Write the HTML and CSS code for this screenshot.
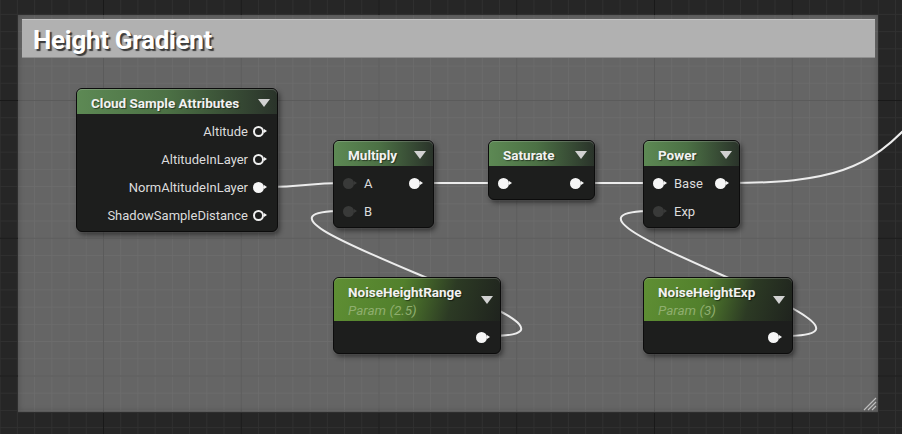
FILE: index.html
```html
<!DOCTYPE html>
<html lang="en">
<head>
    <meta charset="UTF-8">
    <title>Height Gradient</title>
    <link rel="stylesheet" href="styles.css">
</head>
<body>
    <div class="graph">
        <div class="comment">
            <div class="comment-head">Height Gradient</div>
            <svg class="grip" width="16" height="16" viewBox="0 0 16 16">
                <path d="M15 3 L3 15 M15 7 L7 15 M15 11 L11 15" stroke="#bdbdbd" stroke-width="1.2" fill="none"/>
            </svg>
        </div>

        <svg class="wires" width="902" height="434" viewBox="0 0 902 434">
            <g stroke="#ececec" stroke-width="2" fill="none">
                <path d="M268,187 C305,187 306,183 343,183"/>
                <path d="M425,183 L498,183"/>
                <path d="M583,183 L653,183"/>
                <path d="M728,183 C830,183 870,170 915,118"/>
                <path d="M490,336 C640,336 193,211 343,211"/>
                <path d="M784,336 C934,336 503,211 653,211"/>
            </g>
        </svg>

        <!-- cloud sample attributes -->
        <div class="node n-cloud">
            <div class="node-head">
                <span>Cloud Sample Attributes</span>
                <span class="caret"></span>
            </div>
            <div class="node-body">
                <div class="row row-out">Altitude <span class="pin pin-open"></span></div>
                <div class="row row-out">AltitudeInLayer <span class="pin pin-open"></span></div>
                <div class="row row-out">NormAltitudeInLayer <span class="pin"></span></div>
                <div class="row row-out">ShadowSampleDistance <span class="pin pin-open"></span></div>
            </div>
        </div>

        <div class="node n-multiply">
            <div class="node-head">
                <span>Multiply</span>
                <span class="caret"></span>
            </div>
            <div class="node-body">
                <div class="row">
                    <span class="in"><span class="pin pin-off"></span>A</span>
                    <span class="pin"></span>
                </div>
                <div class="row">
                    <span class="in"><span class="pin pin-off"></span>B</span>
                </div>
            </div>
        </div>

        <div class="node n-saturate">
            <div class="node-head">
                <span>Saturate</span>
                <span class="caret"></span>
            </div>
            <div class="node-body">
                <div class="row">
                    <span class="pin"></span>
                    <span class="pin"></span>
                </div>
            </div>
        </div>

        <div class="node n-power">
            <div class="node-head">
                <span>Power</span>
                <span class="caret"></span>
            </div>
            <div class="node-body">
                <div class="row">
                    <span class="in"><span class="pin"></span>Base</span>
                    <span class="pin"></span>
                </div>
                <div class="row">
                    <span class="in"><span class="pin pin-off"></span>Exp</span>
                </div>
            </div>
        </div>

        <!-- params -->
        <div class="node param n-range">
            <div class="node-head">
                <div class="param-title">
                    <span>NoiseHeightRange</span>
                    <span class="param-value">Param (2.5)</span>
                </div>
                <span class="caret"></span>
            </div>
            <div class="node-body">
                <div class="row row-out"><span class="pin"></span></div>
            </div>
        </div>

        <div class="node param n-exp">
            <div class="node-head">
                <div class="param-title">
                    <span>NoiseHeightExp</span>
                    <span class="param-value">Param (3)</span>
                </div>
                <span class="caret"></span>
            </div>
            <div class="node-body">
                <div class="row row-out"><span class="pin"></span></div>
            </div>
        </div>
    </div>
</body>
</html>
```

FILE: styles.css
```css
body {
    margin: 0;
    background-color: #262626;
    font-family: Roboto, "Liberation Sans", sans-serif;
}

.graph {
    position: relative;
    width: 902px;
    height: 434px;
    overflow: hidden;
    background-color: #262626;
    background-image:
        linear-gradient(to right, #191919 1px, transparent 1px),
        linear-gradient(to bottom, #191919 1px, transparent 1px),
        linear-gradient(to right, #303030 1px, transparent 1px),
        linear-gradient(to bottom, #303030 1px, transparent 1px);
    background-size: 137.75px 137.75px, 137.75px 137.75px, 17.22px 17.22px, 17.22px 17.22px;
    background-position: 103px 100px, 103px 100px, 103px 100px, 103px 100px;
}

/* comment box */
.comment {
    position: absolute;
    left: 18px;
    top: 15px;
    width: 860px;
    height: 397px;
    box-sizing: border-box;
    padding: 4px 3px 0 4px;
    background: rgba(255, 255, 255, 0.29);
    box-shadow: inset 0 0 6px rgba(0, 0, 0, 0.25), 0 1px 0 #2e2e2e;
}

.comment-head {
    height: 39px;
    box-sizing: border-box;
    padding-left: 11px;
    background: #b1b1b1;
    border-top: 1px solid #c4c4c4;
    border-bottom: 1px solid #8f8f8f;
    color: #fff;
    font-size: 26px;
    font-weight: bold;
    line-height: 40px;
    letter-spacing: -0.3px;
    text-shadow: 2px 2px 1px #3a3a3a;
}

.grip {
    position: absolute;
    right: 1px;
    bottom: 1px;
}

.wires {
    position: absolute;
    left: 0;
    top: 0;
    z-index: 1;
}

/* nodes */
.node {
    position: absolute;
    z-index: 2;
    box-sizing: border-box;
    background: #1d1e1d;
    border: 1px solid #0c0c0c;
    border-radius: 6px;
    box-shadow: 0 0 0 1px rgba(120, 120, 120, 0.15), 2px 3px 5px rgba(0, 0, 0, 0.45);
    color: #dcdcdc;
    font-size: 13px;
}

.n-cloud { left: 76px; top: 88px; width: 202px; }
.n-multiply { left: 333px; top: 140px; width: 101px; }
.n-saturate { left: 488px; top: 140px; width: 107px; }
.n-power { left: 643px; top: 140px; width: 97px; }
.n-range { left: 333px; top: 277px; width: 168px; }
.n-exp { left: 643px; top: 277px; width: 150px; }

.node-head {
    height: 25px;
    box-sizing: border-box;
    display: flex;
    align-items: center;
    justify-content: space-between;
    padding: 2px 7px 0 14px;
    border-radius: 5px 5px 0 0;
    background: linear-gradient(to right, #5d8954 0%, #4c7145 45%, #2a332a 100%);
    box-shadow: inset 0 1px 0 rgba(255, 255, 255, 0.18);
    color: #f2f2f2;
    font-size: 13.5px;
    font-weight: bold;
    text-shadow: 1px 1px 1px rgba(0, 0, 0, 0.5);
}

.caret {
    width: 0;
    height: 0;
    border-left: 6px solid transparent;
    border-right: 6px solid transparent;
    border-top: 8px solid #d2d2d2;
}

.node-body {
    padding: 3px 0 2px;
}

.row {
    height: 28px;
    display: flex;
    align-items: center;
    justify-content: space-between;
    padding: 0 9px 0 9px;
}

.row-out {
    justify-content: flex-end;
    gap: 5px;
}

.in {
    display: flex;
    align-items: center;
    gap: 6px;
}

/* pins */
.pin {
    position: relative;
    display: inline-block;
    width: 15px;
    height: 11px;
}

.pin::before {
    content: '';
    position: absolute;
    left: 0;
    top: 0;
    width: 11px;
    height: 11px;
    box-sizing: border-box;
    border-radius: 50%;
    background: #f6f6f6;
}

.pin::after {
    content: '';
    position: absolute;
    left: 11px;
    top: 3px;
    border-left: 3px solid #f6f6f6;
    border-top: 2.5px solid transparent;
    border-bottom: 2.5px solid transparent;
}

.pin-open::before {
    background: transparent;
    border: 2px solid #f0f0f0;
}

.pin-off::before {
    background: #393a39;
}

.pin-off::after {
    border-left-color: #393a39;
}

/* parameter nodes */
.param .node-head {
    height: 43px;
    align-items: flex-start;
    padding-top: 5px;
    background: linear-gradient(105deg, #5f8f34 0%, #52802c 40%, #2c3a24 70%, #1f231e 100%);
}

.param .caret {
    margin-top: 13px;
}

.param-title {
    display: flex;
    flex-direction: column;
    line-height: 18px;
}

.param-value {
    color: #8fae6e;
    font-weight: normal;
    font-style: italic;
    text-shadow: none;
}

.param .node-body {
    padding: 2px 0 2px;
}
```
